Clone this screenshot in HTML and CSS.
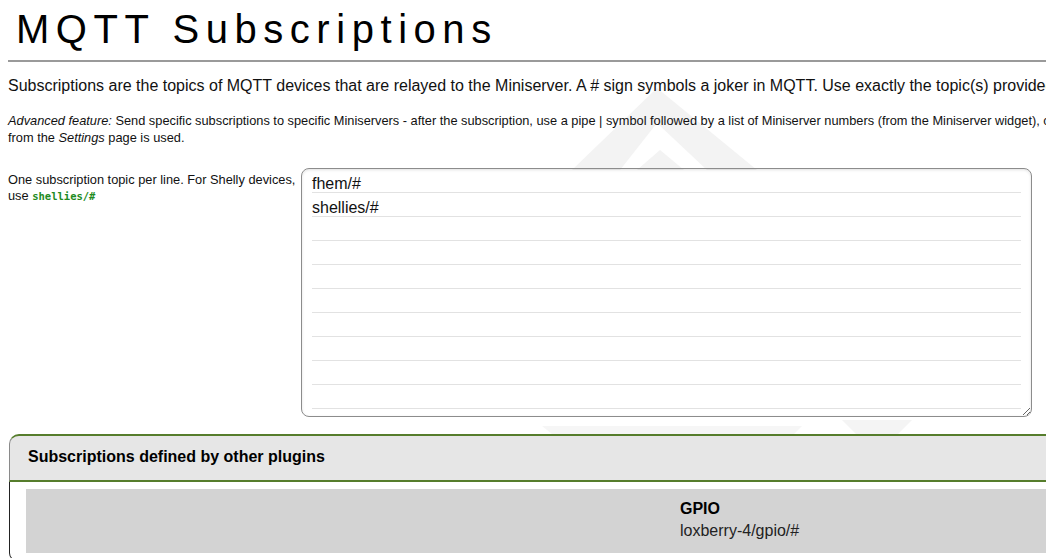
FILE: index.html
```html
<!DOCTYPE html>
<html lang="en">
<head>
<meta charset="utf-8">
<title>MQTT Subscriptions</title>
<link rel="stylesheet" href="styles.css">
</head>
<body>
<div class="page">
  <svg class="watermark" width="520" height="360" viewBox="0 0 520 360" aria-hidden="true">
    <polygon points="60,82 145,0 245,82 195,82 145,35 108,82" fill="#f3f3f3"/>
    <polygon points="125,82 148,62 172,82" fill="#f3f3f3"/>
    <polygon points="30,338 290,338 282,346 40,346" fill="#f6f6f6"/>
    <polygon points="330,332 400,332 380,352 350,352" fill="#f4f4f4"/>
  </svg>

  <h1 class="title">MQTT Subscriptions</h1>
  <div class="rule"></div>

  <p class="intro">Subscriptions are the topics of MQTT devices that are relayed to the Miniserver. A # sign symbols a joker in MQTT. Use exactly the topic(s) provided by your devices or plugins.</p>

  <p class="hint"><em>Advanced feature:</em> Send specific subscriptions to specific Miniservers - after the subscription, use a pipe | symbol followed by a list of Miniserver numbers (from the Miniserver widget), comma separated. If no Miniserver is given, the default Miniserver<br>from the <em>Settings</em> page is used.</p>

  <div class="form-row">
    <label class="form-label" for="subs">One subscription topic per line. For Shelly devices, use <code class="code">shellies/#</code></label>
    <textarea id="subs" class="topics" spellcheck="false">fhem/#
shellies/#</textarea>
  </div>

  <section class="panel">
    <div class="panel-head">Subscriptions defined by other plugins</div>
    <div class="panel-body">
      <div class="plugin-row">
        <div class="plugin-cell"></div>
        <div class="plugin-cell">
          <div class="plugin-name">GPIO</div>
          <div class="plugin-topic">loxberry-4/gpio/#</div>
        </div>
      </div>
    </div>
  </section>
</div>
</body>
</html>
```

FILE: styles.css
```css
html {
  overflow: hidden;
  background: #fff;
}

body {
  margin: 0;
  font-family: "Liberation Sans", Arial, sans-serif;
  color: #111;
}

.page {
  position: relative;
  z-index: 0;
  width: 1330px;
  padding: 0 0 0 8px;
}

.watermark {
  position: absolute;
  left: 512px;
  top: 88px;
  z-index: -1;
}

.title {
  margin: 0;
  padding: 6px 0 0 8px;
  font-size: 40px;
  line-height: 46px;
  font-weight: normal;
  letter-spacing: 6.55px;
  color: #000;
}

.rule {
  margin-top: 8px;
  border-top: 2px solid #9a9a9a;
}

.intro {
  margin: 15px 0 0;
  font-size: 16px;
  line-height: 18px;
  white-space: nowrap;
}

.hint {
  margin: 18px 0 0;
  font-size: 12.8px;
  line-height: 16.5px;
  white-space: nowrap;
}

.form-row {
  display: flex;
  align-items: flex-start;
  margin-top: 22px;
}

.form-label {
  width: 293px;
  flex: none;
  padding-top: 4px;
  font-size: 12.8px;
  line-height: 16px;
}

.code {
  font-family: "DejaVu Sans Mono", "Liberation Mono", monospace;
  font-size: 10.5px;
  line-height: 1;
  font-weight: bold;
  color: #228b22;
}

.topics {
  flex: none;
  width: 731px;
  height: 249px;
  box-sizing: border-box;
  margin: 0;
  padding: 3px 10px;
  border: 1px solid #8c8c8c;
  border-radius: 8px;
  box-shadow: inset 0 1px 3px rgba(0, 0, 0, 0.12);
  font-family: "Liberation Sans", Arial, sans-serif;
  font-size: 16px;
  line-height: 24px;
  color: #111;
  background-color: #fff;
  background-image: linear-gradient(#e2e2e2 1px, transparent 1px);
  background-size: 100% 24px;
  background-position: 0 20px;
  background-origin: content-box;
  background-clip: content-box;
  resize: both;
  outline: none;
}

.panel {
  margin-top: 17px;
  margin-left: 1px;
}

.panel-head {
  padding: 12px 18px 14px;
  border-top: 2px solid #567d2c;
  border-bottom: 2px solid #567d2c;
  border-left: 1px solid #8a8a8a;
  border-top-left-radius: 10px;
  background: #e6e6e6;
  font-size: 16px;
  font-weight: bold;
  line-height: 18px;
  color: #000;
}

.panel-body {
  padding: 7px 16px 7px;
  border-left: 1px solid #222;
  border-bottom: 1px solid #222;
  border-bottom-left-radius: 8px;
  background: #fff;
}

.plugin-row {
  display: grid;
  grid-template-columns: 654px 654px;
  background: #d3d3d3;
}

.plugin-cell {
  padding: 9px 0 11px;
  font-size: 16px;
  line-height: 22px;
}

.plugin-name {
  font-weight: bold;
  color: #000;
}

.plugin-topic {
  color: #222;
}
```
